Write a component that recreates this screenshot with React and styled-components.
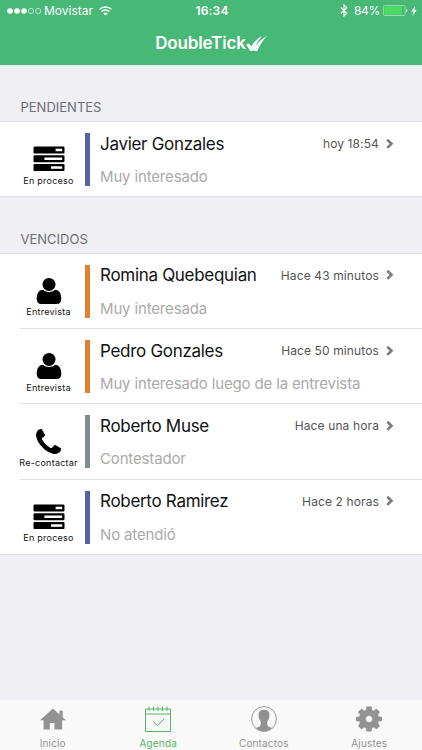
import React from 'react';
import styled, { createGlobalStyle } from 'styled-components';

const pending = [
  { name: 'Javier Gonzales', note: 'Muy interesado', time: 'hoy 18:54', status: 'proceso' },
];

const overdue = [
  { name: 'Romina Quebequian', note: 'Muy interesada', time: 'Hace 43 minutos', status: 'entrevista' },
  { name: 'Pedro Gonzales', note: 'Muy interesado luego de la entrevista', time: 'Hace 50 minutos', status: 'entrevista' },
  { name: 'Roberto Muse', note: 'Contestador', time: 'Hace una hora', status: 'recontactar' },
  { name: 'Roberto Ramirez', note: 'No atendió', time: 'Hace 2 horas', status: 'proceso' },
];

const TasksIcon = () => (
  <svg width="32" height="26" viewBox="0 0 32 26">
    <rect x="0.5" y="0.5" width="31" height="7" rx="1.2" />
    <rect x="0.5" y="9.3" width="31" height="7" rx="1.2" />
    <rect x="0.5" y="18.1" width="31" height="7" rx="1.2" />
    <g fill="#fff">
      <rect x="22.6" y="2.7" width="6.6" height="2.5" />
      <rect x="11.4" y="11.5" width="17.8" height="2.5" />
      <rect x="18" y="20.3" width="11.2" height="2.5" />
    </g>
  </svg>
);

const UserIcon = () => (
  <svg width="26" height="28" viewBox="0 0 26 28">
    <circle cx="13" cy="7.4" r="6.5" />
    <path d="M7 12.8C2.5 13.1.7 17 .7 22c0 3.2 1.8 5 4.600 5h15.400c2.800 0 4.600-1.800 4.600-5 0-5-1.800-8.900-6.300-9.200C17.400 14.200 15.300 15 13 15s-4.400-.8-6-2.200z" />
  </svg>
);

const PhoneIcon = () => (
  <svg width="25" height="25" viewBox="0 0 1408 1408">
    <path d="M1408 1112q0 27-10 70.500t-21 68.500q-21 50-122 106-94 51-186 51-27 0-53-3.500t-57.500-12.500-47-14.500-55.500-20.500-49-18q-98-35-175-83-127-79-264-216T152 776q-48-77-83-175-3-9-18-49t-20.500-55.500-14.500-47T3.500 392 0 339q0-92 51-186Q107 52 157 31q25-11 68.500-21T296 0q14 0 21 3 18 6 53 76 11 19 30 54t35 63.500 31 53.500q3 4 17.500 25t21.500 35.500 7 28.500q0 20-28.500 50t-62 55-62 53-28.500 46q0 9 5 22.500t8.500 20.500 14 24 11.500 19q76 137 174 235t235 174q2 1 19 11.500t24 14 20.500 8.500 22.500 5q18 0 46-28.500t53-62 55-62 50-28.500q14 0 28.500 7t35.500 21.500 25 17.500q25 15 53.500 31t63.500 35 54 30q70 35 76 53 3 7 3 21z" />
  </svg>
);

const statuses = {
  proceso: { label: 'En proceso', color: '#5363a3', icon: <TasksIcon /> },
  entrevista: { label: 'Entrevista', color: '#df812d', icon: <UserIcon /> },
  recontactar: { label: 'Re-contactar', color: '#7f8c8d', icon: <PhoneIcon /> },
};

const Appointment = ({ item }) => {
  const status = statuses[item.status];

  return (
    <Row>
      <Status>
        <StatusIcon>{status.icon}</StatusIcon>
        <StatusLabel>{status.label}</StatusLabel>
      </Status>
      <Stripe $color={status.color} />
      <Details>
        <Summary>
          <Name>{item.name}</Name>
          <Time>{item.time}</Time>
          <Chevron viewBox="0 0 8 12">
            <path d="M1.300 1.700 5.500 5.800 1.300 9.900" fill="none" stroke="#7c7c7c" strokeWidth="2.600" />
          </Chevron>
        </Summary>
        <Note>{item.note}</Note>
      </Details>
    </Row>
  );
};

const HomeIcon = () => (
  <svg width="26" height="26" viewBox="0 0 26 26">
    <path d="M13 2.500 0 14.300h3.600V23.500h6.200v-6.500h4.600v6.500h7.700v-9.200H26l-3.300-3V4.600h-3.200v3.800z" />
  </svg>
);

const CalendarIcon = () => (
  <svg width="26" height="26" viewBox="0 0 26 26" fill="none" stroke="currentColor" strokeWidth="1">
    <path d="M.5 3h25v22.500H.5zM.5 8h25" />
    <path d="M4 .5v4.500M8.500 .5v4.500M13 .5v4.500M17.500 .5v4.500M22 .5v4.500" />
    <path d="m8 15.500 4.500 4 6.500-6.500" />
  </svg>
);

const ContactIcon = () => (
  <svg width="26" height="26" viewBox="0 0 26 26">
    <circle cx="13" cy="13" r="12.400" fill="none" stroke="currentColor" strokeWidth="0.900" />
    <path d="M13 3.800c-3.700 0-5.500 1.700-5.400 5 0 3 .7 5 2.200 7 .2 3.200-.4 4.600-2.200 5.200L4.600 22.100C6.800 24.400 9.800 25.500 13 25.500s6.200-1.100 8.400-3.400l-3-1.100c-1.800-.6-2.400-2-2.200-5.200 1.500-2 2.200-4 2.200-7 .1-3.300-1.700-5-5.400-5z" />
  </svg>
);

const GearIcon = () => (
  <svg width="26" height="26" viewBox="0 0 26 26">
    <path
      fillRule="evenodd"
      d="M10.700.8h4.600l.6 3.400 1.700.7 2.900-2 3.200 3.200-2 2.900.7 1.700 3.400.6v3.400l-3.400.6-.7 1.700 2 2.900-3.200 3.200-2.900-2-1.700.7-.6 3.400h-4.600l-.6-3.400-1.700-.7-2.900 2-3.200-3.200 2-2.900-.7-1.700-3.400-.6v-3.400l3.400-.6.700-1.700-2-2.900 3.200-3.200 2.900 2 1.700-.7zM13 9.500a3.500 3.500 0 1 0 0 7 3.500 3.500 0 0 0 0-7z"
      stroke="currentColor"
      strokeWidth="0.600"
      strokeLinejoin="round"
    />
  </svg>
);

const tabs = [
  { label: 'Inicio', icon: <HomeIcon /> },
  { label: 'Agenda', icon: <CalendarIcon />, active: true },
  { label: 'Contactos', icon: <ContactIcon /> },
  { label: 'Ajustes', icon: <GearIcon /> },
];

const App = () => (
  <Screen>
    <GlobalStyle />
    <Header>
      <StatusBar>
        <Carrier>
          <svg width="35" height="8" viewBox="0 0 35 8">
            <g fill="#fff">
              <circle cx="3" cy="4" r="2.800" />
              <circle cx="10" cy="4" r="2.800" />
              <circle cx="17" cy="4" r="2.800" />
            </g>
            <g fill="none" stroke="#fff" strokeWidth="0.600">
              <circle cx="24" cy="4" r="2.600" />
              <circle cx="31.200" cy="4" r="2.600" />
            </g>
          </svg>
          <span>Movistar</span>
          <svg width="13" height="10" viewBox="0 0 13 10">
            <g fill="none" stroke="#fff" strokeWidth="1.500">
              <path d="M.6 3.300a8.500 8.500 0 0 1 11.800 0" />
              <path d="M2.700 5.600a5.500 5.500 0 0 1 7.600 0" />
            </g>
            <path d="M4.400 7.400a3.100 3.100 0 0 1 4.200 0L6.500 9.600z" fill="#fff" />
          </svg>
        </Carrier>
        <Clock>16:34</Clock>
        <Power>
          <svg width="8" height="13" viewBox="0 0 8 13">
            <path d="m.8 3.500 6 5.800L4 12V1l2.800 2.700-6 5.800" fill="none" stroke="#fff" strokeWidth="1.100" />
          </svg>
          <Percent>84%</Percent>
          <svg width="25" height="11" viewBox="0 0 25 11">
            <rect x="0.500" y="0.500" width="21.500" height="10" rx="1" fill="none" stroke="#b5e4c3" strokeWidth="0.700" />
            <rect x="1.300" y="1.300" width="17.700" height="8.400" fill="#4cd964" />
            <path d="M23.200 3.700c1.700.6 1.700 3 0 3.600z" fill="#d5f0dd" />
          </svg>
          <svg width="6" height="10" viewBox="0 0 6 10">
            <path d="M4.300 0 .2 5.600h2.300L1.500 10l4.300-6H3.300z" fill="#fff" />
          </svg>
        </Power>
      </StatusBar>
      <Brand>
        <BrandName>DoubleTick</BrandName>
        <svg width="21" height="17" viewBox="0 0 21 17">
          <g fill="#fff">
            <path d="M.2 9.600 2.600 8.400 5.300 11.200C8 7 11.300 3.600 16 .7 12.800 5 9.700 10 7 16H4.200z" />
            <path d="m8.700 12 1-.9C12.500 7 16 3.700 20.800.9 16.800 5.400 13.800 10 11.300 16H8.600L7.600 14.600z" />
          </g>
        </svg>
      </Brand>
    </Header>
    <Content>
      <SectionTitle $height={56}>PENDIENTES</SectionTitle>
      <List>
        {pending.map((item) => <Appointment key={item.name} item={item} />)}
      </List>
      <SectionTitle $height={55.3}>VENCIDOS</SectionTitle>
      <List>
        {overdue.map((item) => <Appointment key={item.name} item={item} />)}
      </List>
    </Content>
    <TabBar>
      {tabs.map((tab) => (
        <Tab key={tab.label} $active={tab.active}>
          {tab.icon}
          <TabLabel>{tab.label}</TabLabel>
        </Tab>
      ))}
    </TabBar>
  </Screen>
);

// Styled Components
const GlobalStyle = createGlobalStyle`
  * {
    box-sizing: border-box;
  }

  body {
    margin: 0;
    font-family: Inter, "Liberation Sans", sans-serif;
  }
`;

const Screen = styled.div`
  display: flex;
  flex-direction: column;
  width: 422px;
  height: 750px;
  overflow: hidden;
  background: #efeff4;
`;

const Header = styled.header`
  height: 65px;
  flex-shrink: 0;
  background: #48b877;
  color: white;
`;

const StatusBar = styled.div`
  display: grid;
  grid-template-columns: 1fr auto 1fr;
  align-items: center;
  height: 21px;
  padding: 0 5px 0 7px;
  font-size: 12px;
`;

const Carrier = styled.div`
  display: flex;
  align-items: center;
  gap: 2px;

  svg:last-child {
    margin-left: 4px;
  }
`;

const Clock = styled.div`
  font-weight: 600;
  letter-spacing: 0.2px;
`;

const Power = styled.div`
  display: flex;
  align-items: center;
  justify-content: flex-end;
  gap: 3px;
`;

const Percent = styled.span`
  margin-left: 3px;
  letter-spacing: -0.3px;
`;

const Brand = styled.div`
  display: flex;
  align-items: center;
  justify-content: center;
  height: 44px;
`;

const BrandName = styled.h1`
  margin: 0;
  font-size: 17px;
  font-weight: 600;
  letter-spacing: -0.15px;
`;

const Content = styled.main`
  flex: 1;
`;

const SectionTitle = styled.h2`
  height: ${props => props.$height}px;
  margin: 0;
  padding: 33px 0 0 20.5px;
  font-size: 13px;
  line-height: 18px;
  font-weight: 400;
  letter-spacing: 0;
  color: #6d6d72;
`;

const List = styled.ul`
  margin: 0;
  padding: 0;
  list-style: none;
  background: white;
  border-top: 1px solid #dfdfe4;
  border-bottom: 1px solid #dfdfe4;
`;

const Row = styled.li`
  display: flex;
  height: 74.4px;
  margin-left: 20px;

  & + & {
    height: 75.3px;
    border-top: 1px solid #e2e2e4;
  }
`;

const Status = styled.div`
  display: flex;
  flex-direction: column;
  align-items: center;
  width: 57px;
  padding-top: 23px;
`;

const StatusIcon = styled.div`
  display: flex;
  align-items: center;
  justify-content: center;
  height: 28px;
`;

const StatusLabel = styled.div`
  margin-top: 0.5px;
  font-size: 9px;
  line-height: 13px;
  letter-spacing: 0.25px;
  white-space: nowrap;
  color: #111;
`;

const Stripe = styled.div`
  width: 5px;
  height: 53px;
  margin: 11px 10.5px 0 7.5px;
  background: ${props => props.$color};
`;

const Details = styled.div`
  flex: 1;
  padding: 10px 28px 0 0;
`;

const Summary = styled.div`
  display: flex;
  align-items: center;
  height: 23px;
`;

const Name = styled.div`
  flex: 1;
  font-size: 17px;
  letter-spacing: -0.3px;
  white-space: nowrap;
  color: #111;
`;

const Time = styled.div`
  font-size: 12px;
  letter-spacing: 0.12px;
  white-space: nowrap;
  color: #555;
`;

const Chevron = styled.svg`
  width: 8px;
  height: 12px;
  margin-left: 7px;
`;

const Note = styled.div`
  margin-top: 12px;
  font-size: 15px;
  line-height: 20px;
  letter-spacing: -0.15px;
  color: #aaa;
`;

const TabBar = styled.nav`
  display: grid;
  grid-template-columns: repeat(4, 1fr);
  height: 50px;
  background: #f9f9f9;
`;

const Tab = styled.div`
  display: flex;
  flex-direction: column;
  align-items: center;
  padding-top: 6px;
  color: ${props => props.$active ? '#55b565' : '#929292'};

  svg:not([fill="none"]) {
    fill: currentColor;
  }
`;

const TabLabel = styled.span`
  margin-top: 4px;
  font-size: 10px;
  line-height: 14px;
  letter-spacing: 0.15px;
`;

export default App;
